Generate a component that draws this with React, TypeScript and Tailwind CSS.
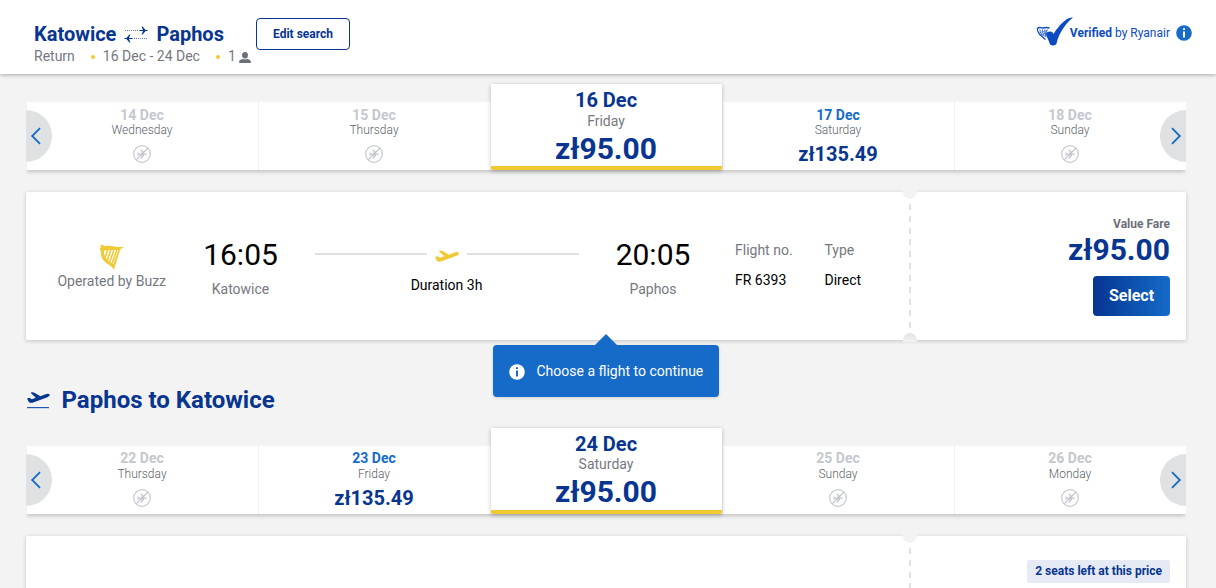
import type { ReactNode } from "react"
import clsx from "clsx"

interface Day {
  date: string
  weekday: string
  price?: string
  selected?: boolean
}

const outboundDays: Day[] = [
  { date: "14 Dec", weekday: "Wednesday" },
  { date: "15 Dec", weekday: "Thursday" },
  { date: "16 Dec", weekday: "Friday", price: "zł95.00", selected: true },
  { date: "17 Dec", weekday: "Saturday", price: "zł135.49" },
  { date: "18 Dec", weekday: "Sunday" },
]

const returnDays: Day[] = [
  { date: "22 Dec", weekday: "Thursday" },
  { date: "23 Dec", weekday: "Friday", price: "zł135.49" },
  { date: "24 Dec", weekday: "Saturday", price: "zł95.00", selected: true },
  { date: "25 Dec", weekday: "Sunday" },
  { date: "26 Dec", weekday: "Monday" },
]

function RouteIcon() {
  return (
    <svg width="24" height="18" viewBox="0 0 24 18" fill="#073590">
      <path d="M1 5.500h15" stroke="#5f7fbd" strokeWidth="1" strokeDasharray="1 1" />
      <path d="M16 5h3l-1.400-3.500h1L21.600 5h2v1h-2l-3 3.500h-1L19 6h-3z" />
      <path d="M8 13.500h15" stroke="#5f7fbd" strokeWidth="1" strokeDasharray="1 1" />
      <path d="M8 13H5l1.400-3.500h-1L2.400 13h-2v1h2l3 3.500h1L5 14h3z" />
    </svg>
  )
}

function PersonIcon() {
  return (
    <svg width="12" height="11" viewBox="0 0 12 11" fill="#6a6f79">
      <ellipse cx="6" cy="3.3" rx="2.9" ry="3.2" />
      <path d="M0.2 11V9.4C0.2 8 2.2 7.4 4.4 7c1 .6 2.2.6 3.2 0 2.200.4 4.200 1 4.200 2.400V11z" />
    </svg>
  )
}

function InfoIcon({ className, mark }: { className: string; mark: string }) {
  return (
    <svg width="16" height="16" viewBox="0 0 16 16" className={className}>
      <circle cx="8" cy="8" r="7.8" fill="currentColor" />
      <path d="M7 3.300h2v1.800H7zM7 6.400h2v6.200H7z" fill={mark} />
    </svg>
  )
}

function VerifiedIcon() {
  return (
    <svg width="38" height="30" viewBox="0 0 38 30">
      <g fill="none" stroke="#0d4bc0" strokeWidth=".8">
        <path d="M1.500 11.500C4 9 5 11.500 7 11c2-.6 4-1 6.500 0" strokeWidth="1.400" />
        <path d="M1.500 11c-.5 3 1.500 6 4 8l4 3.500" strokeWidth="1.200" />
        <path d="M4 12.500c0 3 1 4 2.500 6M6.500 12.500c0 3 .5 5 2 7M9 12.500c-.5 3 0 5 .8 7.500M11.500 12.500c-1.500 2-2 4-1.500 6" />
        <path d="M3.500 15.500l8-2M5 18l6-2.500" strokeWidth=".5" />
      </g>
      <path
        d="M37 .6c-3-.2-6.500 1.400-9.500 4.200-4 3.600-7.600 8.200-9.900 12.200-1-1.700-2-2.400-3.500-2.400-2.200 0-4.300 1.100-4 2.800.2 1.800 2.200 5 3.300 8.300.7 2 1.300 2.800 3.400 2.700 2.200-.1 3.200-.6 3.900-2.500C22.800 17.600 28.200 7.700 37 .6z"
        fill="#0d4bc0"
      />
    </svg>
  )
}

function NoFlightIcon() {
  return (
    <svg width="18" height="18" viewBox="0 0 18 18" fill="none" stroke="#c4c8ce">
      <circle cx="9" cy="9" r="8.300" strokeWidth="1.200" />
      <path d="M3 15L15 3" strokeWidth="1.200" />
      <path
        d="M4.600 6.800l1.500 1.700h2.700L7.800 4.500h1.100l2.400 4h1.800c1.200 0 1.200 1.300 0 1.300h-1.800l-2.400 4H7.800l1-4H6.100l-1.500 1.500z"
        fill="#c4c8ce"
        stroke="none"
      />
    </svg>
  )
}

function HarpIcon() {
  return (
    <svg width="26" height="26" viewBox="0 0 26 26">
      <path
        d="M2.200 1C3.500.4 4.800 1 5 2.300c2-.5 4.200-.7 6.500-.4 5 .6 8.500 2 13.500.6-.5 1.300-2 2-3.500 2.300L15.200 24.500c-.2.700-.8.900-1.100.3-.7-1.500-2-2.500-4.200-4C5.500 18 2 14.500 2 9.500c0-1.600-.1-2.500-.6-3.300C.6 5 .9 3.800 1.900 3.500 1.200 2.700 1.300 1.500 2.200 1z"
        fill="#f1c933"
      />
      <path d="M5 7c3-2 8.500-.6 14.500-1L14.300 20C10 17.500 4.500 14 5 7z" fill="#fff" />
      <path
        d="M8.600 6L6.300 13M11.800 6L8.500 16M15 6.200l-4.300 11.500M18 6.200l-5 13"
        fill="none"
        stroke="#f1c933"
        strokeWidth="1.600"
      />
    </svg>
  )
}

const planePath =
  "M.6 8.200C0 7.500.4 6.800 1.200 6.600l.9-.2c.5-.1.9.1 1.400.5l1.500.9 4.300-1.500L4.500 1.700c-.5-.6-.3-1 .3-1.100 1.300-.2 2 0 3 .500l6.300 3.600 5.500-2.100c1.500-.6 3.500-.8 4.200.3.600 1-.4 2-2.300 2.800l-14.300 5.400c-1.700.6-3.200.7-4.400.3C1.800 11 1.200 9.400.6 8.200z"

function PlaneIcon() {
  return (
    <svg width="24" height="12" viewBox="0 0 24 12" fill="#f1c933">
      <path d={planePath} />
    </svg>
  )
}

function DepartureIcon() {
  return (
    <svg width="24" height="18" viewBox="0 0 24 18" fill="#073590">
      <path d={planePath} transform="translate(1 .8) scale(.95)" />
      <path d="M1 16h22v1.200H1z" fill="#2557b5" />
    </svg>
  )
}

function ArrowButton({ side }: { side: "left" | "right" }) {
  return (
    <button
      className={clsx(
        "absolute bottom-2 flex h-[52px] w-[26px] items-center bg-[#e0e1e3]",
        side === "left" ? "left-0 rounded-r-full pl-[4px]" : "right-0 rounded-l-full pl-[10px]",
      )}
    >
      <svg width="12" height="18" viewBox="0 0 12 18" fill="none" stroke="#166bc8" strokeWidth="1.800">
        <path d={side === "left" ? "M10 1.200L2.200 9L10 16.800" : "M2 1.200L9.800 9L2 16.800"} />
      </svg>
    </button>
  )
}

function DayCell({ day }: { day: Day }) {
  if (day.selected) {
    return (
      <div className="relative z-10 ml-px flex h-[86px] w-[231px] flex-col items-center rounded-b-[2px] border-b-4 border-[#f1c933] bg-white pt-1 pr-px shadow-[0_1px_4px_rgba(0,0,0,0.25)]">
        <span className="text-[20px] leading-6 font-bold text-[#073590]">{day.date}</span>
        <span className="-mt-[0.4px] text-sm leading-[18px] text-[#75787f]">{day.weekday}</span>
        <span className="mt-px text-[30px] leading-9 font-bold text-[#073590]">{day.price}</span>
      </div>
    )
  }
  return (
    <div className="flex h-[68px] w-[232px] flex-col items-center border-l border-[#f1f1f1] pt-[4.6px] pr-px">
      <span className={clsx("text-sm leading-4 font-bold", day.price ? "text-[#166bc8]" : "text-[#c4c8ce]")}>
        {day.date}
      </span>
      <span className="mt-[0.4px] text-xs leading-[14px] font-light text-[#5b5f69]">{day.weekday}</span>
      {day.price ? (
        <span className="mt-[5px] text-[20px] leading-6 font-bold text-[#073590]">{day.price}</span>
      ) : (
        <span className="mt-2">
          <NoFlightIcon />
        </span>
      )}
    </div>
  )
}

function DateCarousel({ days }: { days: Day[] }) {
  return (
    <div className="relative flex h-[86px] items-end [clip-path:inset(-8px_0_-8px_0)]">
      <div className="flex h-[68px] items-end bg-white shadow-[0_3px_4px_-1px_rgba(0,0,0,0.2)]">
        {days.map((day) => (
          <DayCell key={day.date} day={day} />
        ))}
      </div>
      <ArrowButton side="left" />
      <ArrowButton side="right" />
    </div>
  )
}

function TimeStop({ time, city }: { time: string; city: string }) {
  return (
    <div className="flex w-[86px] shrink-0 flex-col items-center pt-[45px]">
      <span className="text-[30px] leading-9 text-black">{time}</span>
      <span className="mt-[7px] text-sm leading-[18px] text-[#75787f]">{city}</span>
    </div>
  )
}

function Detail({ label, value }: { label: string; value: string }) {
  return (
    <div className="flex w-[89.5px] shrink-0 flex-col gap-3 pt-[49px] text-sm leading-[18px]">
      <span className="text-[#75787f]">{label}</span>
      <span className="text-black">{value}</span>
    </div>
  )
}

function FlightCard({ children, fare }: { children?: ReactNode; fare: ReactNode }) {
  return (
    <div className="relative flex h-[148px] rounded-[2px] bg-white shadow-[0_1px_4px_rgba(0,0,0,0.2)]">
      <div className="flex w-[883px] shrink-0">{children}</div>
      <div className="mt-3 h-[125px] w-[2px] bg-[repeating-linear-gradient(to_bottom,#e0e0e0_0_6px,transparent_6px_11.83px)]" />
      {/* ticket notches */}
      <div className="absolute -top-[3px] left-[877px] h-[10px] w-[14px] rounded-b-full bg-[#f3f3f3]" />
      <div className="absolute -bottom-[2px] left-[877px] h-[9px] w-[14px] rounded-t-full bg-linear-to-b from-[#e2e2e2] to-[#f3f3f3]" />
      <div className="flex flex-1 flex-col items-end pr-4">{fare}</div>
    </div>
  )
}

export default function App() {
  return (
    <div className="h-[588px] w-[1216px] overflow-hidden bg-[#f3f3f3] font-[Roboto,sans-serif]">
      <header className="relative z-20 flex h-[74px] bg-white pr-6 pl-[34px] shadow-[0_1px_4px_rgba(0,0,0,0.3)]">
        <div className="w-[222px] pt-[22px]">
          <div className="flex items-center text-[20px] leading-6 font-bold text-[#073590]">
            Katowice
            <span className="mr-2 ml-2">
              <RouteIcon />
            </span>
            Paphos
          </div>
          <div className="flex items-center text-sm leading-5 text-[#75787f]">
            Return
            <span className="mt-[2px] mr-[8px] ml-4 size-1 rounded-full bg-[#f1c933]" />
            16 Dec - 24 Dec
            <span className="mt-[2px] mr-[8px] ml-4 size-1 rounded-full bg-[#f1c933]" />
            1
            <span className="mt-[2px] ml-[3px]">
              <PersonIcon />
            </span>
          </div>
        </div>
        <button className="mt-[18px] h-8 w-[94px] rounded border border-[#073590] text-xs font-bold text-[#073590]">
          Edit search
        </button>
        <div className="mt-[16px] ml-auto flex h-[33px] items-center text-xs text-[#0d4bc0]">
          <span className="-mt-[2px] -mr-[4px]">
            <VerifiedIcon />
          </span>
          <span>
            <b>Verified</b> by Ryanair
          </span>
          <InfoIcon className="ml-[6px] text-[#166bc8]" mark="#fff" />
        </div>
      </header>

      <main className="ml-[26px] w-[1160px] pt-[10px]">
        <DateCarousel days={outboundDays} />

        <div className="relative z-20 mt-[22px]">
          <FlightCard
            fare={
              <>
                <span className="mt-[24px] text-xs leading-4 font-bold text-[#6b6f78]">Value Fare</span>
                <span className="text-[30px] leading-9 font-bold text-[#073590]">zł95.00</span>
                <button className="mt-2 h-10 w-[77px] rounded bg-linear-to-r from-[#073590] to-[#166bc8] text-base font-bold text-white">
                  Select
                </button>
              </>
            }
          >
            <div className="flex w-[171.5px] shrink-0 flex-col items-center pt-[52px]">
              <HarpIcon />
              <span className="mt-[2px] text-sm leading-[18px] text-[#75787f]">Operated by Buzz</span>
            </div>
            <TimeStop time="16:05" city="Katowice" />
            <div className="mr-[31px] ml-[31.5px] w-[264px] shrink-0 pt-[58px] text-center">
              <div className="flex h-3 items-center">
                <div className="-mt-[5px] h-[2px] w-28 bg-[#e0e0e0]" />
                <span className="mx-2">
                  <PlaneIcon />
                </span>
                <div className="-mt-[5px] h-[2px] w-28 bg-[#e0e0e0]" />
              </div>
              <div className="mt-[14px] pr-px text-sm leading-[18px] text-black">Duration 3h</div>
            </div>
            <TimeStop time="20:05" city="Paphos" />
            <div className="ml-[39px] flex">
              <Detail label="Flight no." value="FR 6393" />
              <Detail label="Type" value="Direct" />
            </div>
          </FlightCard>

          <div className="absolute top-[153px] left-[467px] flex h-[52px] w-[226px] items-center rounded bg-[#166bc8] pl-4 text-sm text-white shadow-[0_1px_3px_rgba(0,0,0,0.15)]">
            <svg width="22" height="11" viewBox="0 0 22 11" className="absolute -top-[11px] left-[102px]">
              <path d="M0 11L11 0l11 11z" fill="#166bc8" />
            </svg>
            <InfoIcon className="mt-px text-white" mark="#166bc8" />
            <span className="ml-[11.5px]">Choose a flight to continue</span>
          </div>
        </div>

        <div className="flex h-[87.8px] items-center pt-[32.2px]">
          <DepartureIcon />
          <h2 className="ml-[11.5px] text-2xl font-bold text-[#073590]">Paphos to Katowice</h2>
        </div>

        <DateCarousel days={returnDays} />

        <div className="mt-[22px]">
          <FlightCard
            fare={
              <span className="mt-6 flex h-[23px] items-center rounded-[2px] bg-[#e6eaf4] px-2 text-xs leading-[22px] font-bold text-[#073590]">
                2 seats left at this price
              </span>
            }
          />
        </div>
      </main>
    </div>
  )
}
